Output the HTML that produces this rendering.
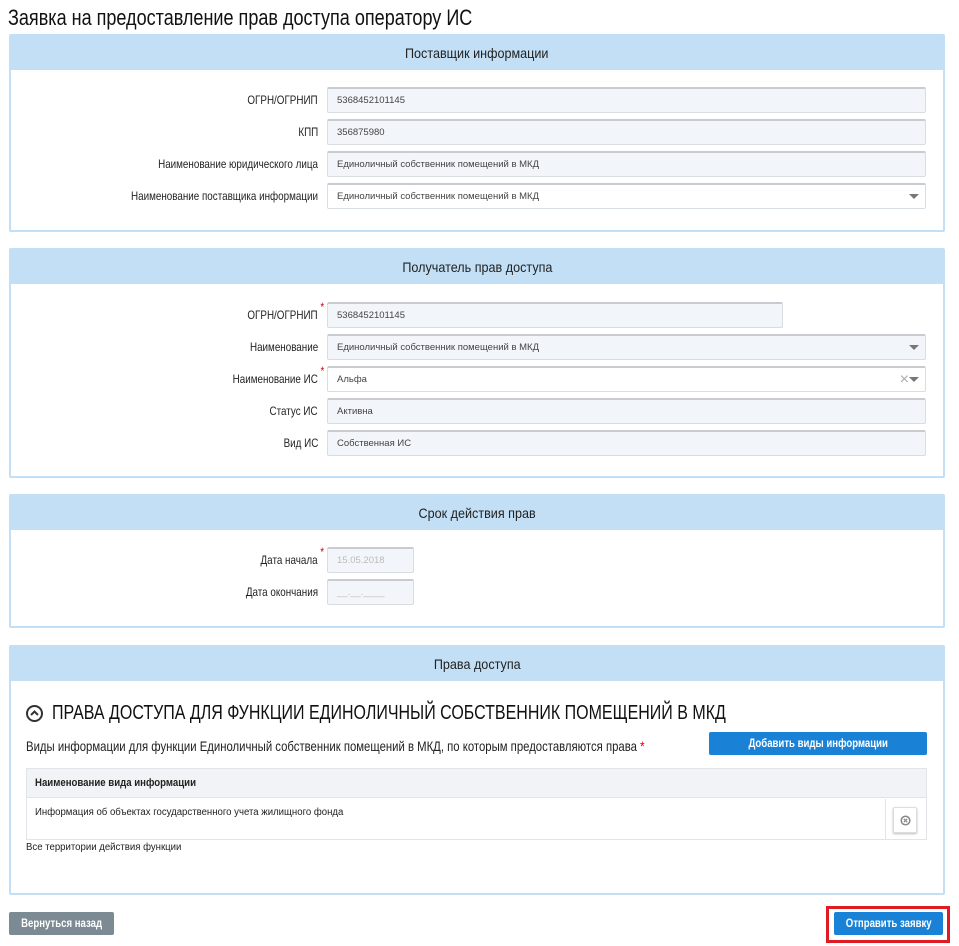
<!DOCTYPE html>
<html><head><meta charset="utf-8"><style>
*{box-sizing:border-box;margin:0;padding:0}
body{width:959px;height:946px;background:#fff;font-family:"Liberation Sans",sans-serif;color:#222;position:relative;overflow:hidden}
.a{position:absolute}
.c{display:inline-block;white-space:nowrap}
h1{position:absolute;left:8px;top:5px;font-size:22px;font-weight:normal;color:#111;white-space:nowrap;transform:scaleX(.82);transform-origin:left}
.p{position:absolute;left:9px;width:936px;border:2px solid #c2dff5;border-radius:2px}
.ph{background:#c2dff5;height:34px;line-height:34px;text-align:center;font-size:14px;color:#222}
.ph span{display:inline-block;transform:scaleX(.9)}
.lb{position:absolute;right:641px;font-size:12px;color:#222;white-space:nowrap;text-align:right;line-height:26px;transform:scaleX(.82);transform-origin:right}
.lb sup{color:#d0021b;font-size:12px;position:absolute;right:-8px;top:-8px}
.in{position:absolute;left:327px;height:26px;border:1px solid #d8dde2;border-top:2px solid #c8ccd0;background:#f2f5fa;border-radius:2px;font-size:9.5px;color:#444;padding-left:9px;line-height:23px;white-space:nowrap}
.w{background:#fff}
.arr{position:absolute;right:6px;top:9px;width:0;height:0;border-left:5px solid transparent;border-right:5px solid transparent;border-top:5px solid #777}
.btn{position:absolute;height:23px;border-radius:2px;color:#fff;font-size:12px;font-weight:bold;text-align:center;line-height:23px;white-space:nowrap}
.btn span{display:inline-block;transform:scaleX(.8)}
</style></head><body>
<h1>Заявка на предоставление прав доступа оператору ИС</h1>

<div class="p" style="top:34px;height:198px"><div class="ph"><span>Поставщик информации</span></div></div>
<div class="lb" style="top:87px">ОГРН/ОГРНИП</div><div class="in" style="top:87px;width:599px">5368452101145</div>
<div class="lb" style="top:119px">КПП</div><div class="in" style="top:119px;width:599px">356875980</div>
<div class="lb" style="top:151px">Наименование юридического лица</div><div class="in" style="top:151px;width:599px">Единоличный собственник помещений в МКД</div>
<div class="lb" style="top:183px">Наименование поставщика информации</div><div class="in w" style="top:183px;width:599px">Единоличный собственник помещений в МКД<span class="arr"></span></div>

<div class="p" style="top:248px;height:230px"><div class="ph"><span>Получатель прав доступа</span></div></div>
<div class="lb" style="top:302px">ОГРН/ОГРНИП<sup>*</sup></div><div class="in" style="top:302px;width:456px">5368452101145</div>
<div class="lb" style="top:334px">Наименование</div><div class="in" style="top:334px;width:599px">Единоличный собственник помещений в МКД<span class="arr"></span></div>
<div class="lb" style="top:366px">Наименование ИС<sup>*</sup></div><div class="in w" style="top:366px;width:599px">Альфа<span class="a" style="right:16px;top:0;color:#aaa;font-size:16px;font-weight:100">×</span><span class="arr"></span></div>
<div class="lb" style="top:398px">Статус ИС</div><div class="in" style="top:398px;width:599px">Активна</div>
<div class="lb" style="top:430px">Вид ИС</div><div class="in" style="top:430px;width:599px">Собственная ИС</div>

<div class="p" style="top:494px;height:134px"><div class="ph"><span>Срок действия прав</span></div></div>
<div class="lb" style="top:547px">Дата начала<sup>*</sup></div><div class="in" style="top:547px;width:87px;color:#bbb">15.05.2018</div>
<div class="lb" style="top:579px">Дата окончания</div><div class="in" style="top:579px;width:87px;color:#bbb">__.__.____</div>

<div class="p" style="top:645px;height:250px"><div class="ph"><span>Права доступа</span></div></div>
<div class="a" style="left:26px;top:705px;width:17px;height:17px;border:2px solid #333;border-radius:50%"><svg width="13" height="13" viewBox="0 0 13 13" style="position:absolute;left:0;top:0"><path d="M3 8 L6.5 4.5 L10 8" fill="none" stroke="#333" stroke-width="2"/></svg></div>
<div class="a" style="left:52px;top:702px;font-size:20px;color:#111;white-space:nowrap;transform:scaleX(.8);transform-origin:left">ПРАВА ДОСТУПА ДЛЯ ФУНКЦИИ ЕДИНОЛИЧНЫЙ СОБСТВЕННИК ПОМЕЩЕНИЙ В МКД</div>
<div class="a" style="left:26px;top:738px;font-size:14px;white-space:nowrap;transform:scaleX(.81);transform-origin:left">Виды информации для функции Единоличный собственник помещений в МКД, по которым предоставляются права <span style="color:#d0021b">*</span></div>
<div class="btn" style="left:709px;top:732px;width:218px;background:#1a82d6"><span>Добавить виды информации</span></div>
<div class="a" style="left:26px;top:768px;width:901px;height:72px;border:1px solid #e1e5ea"></div>
<div class="a" style="left:27px;top:769px;width:899px;height:29px;background:#f1f3f6;border-bottom:1px solid #e1e5ea;font-size:11px;font-weight:bold;padding-left:8px;line-height:29px;white-space:nowrap"><span class="c" style="transform:scaleX(.875);transform-origin:left">Наименование вида информации</span></div>
<div class="a" style="left:35px;top:807px;font-size:10px;white-space:nowrap;transform:scaleX(.96);transform-origin:left">Информация об объектах государственного учета жилищного фонда</div>
<div class="a" style="left:885px;top:799px;width:1px;height:40px;background:#e1e5ea"></div>
<div class="a" style="left:893px;top:807px;width:24px;height:26px;border:1px solid #ddd;border-radius:2px;box-shadow:0 1px 2px #bbb;background:#fff"><svg class="a" style="left:6px;top:7px" width="11" height="11" viewBox="0 0 11 11"><circle cx="5.5" cy="5.5" r="4.3" fill="none" stroke="#888" stroke-width="1.5"/><path d="M3.8 3.8L7.2 7.2M7.2 3.8L3.8 7.2" stroke="#888" stroke-width="1.2"/></svg></div>
<div class="a" style="left:26px;top:842px;font-size:10px;white-space:nowrap;transform:scaleX(.96);transform-origin:left">Все территории действия функции</div>

<div class="btn" style="left:9px;top:912px;width:105px;background:#7c8a94"><span>Вернуться назад</span></div>
<div class="a" style="left:826px;top:906px;width:124px;height:37px;border:3px solid #e01b24"></div>
<div class="btn" style="left:834px;top:912px;width:109px;background:#1a82d6"><span>Отправить заявку</span></div>
</body></html>
